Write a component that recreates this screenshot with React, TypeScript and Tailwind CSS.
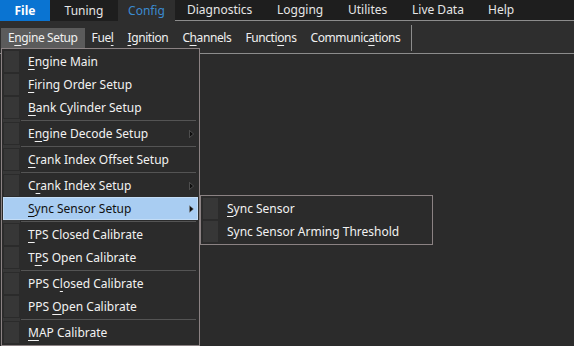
import React from "react";

type Item = { pre: string; key?: string; post?: string; sub?: boolean; active?: boolean };

const font = { fontFamily: '"Noto Sans", "Open Sans", sans-serif' };

function Label({ pre, k, post }: { pre: string; k?: string; post?: string }) {
  return (
    <span className="whitespace-nowrap">
      {pre}
      {k && <span className="underline underline-offset-[3px] decoration-1">{k}</span>}
      {post}
    </span>
  );
}

function Arrow() {
  return (
    <svg width="5" height="8" viewBox="0 0 5 8" className="shrink-0">
      <path d="M0.5 0.5 L4.5 4 L0.5 7.5 Z" fill="#0d0d0d" stroke="#9a9a9a" strokeWidth="0.4" />
    </svg>
  );
}

function MenuRow({ item }: { item: Item }) {
  const on = item.active;
  return (
    <div
      className={`mx-px flex h-[23px] items-center border ${
        on ? "border-[#c3dcf5] bg-[#a9cdf2] text-[#111]" : "border-transparent text-[#f2f2f2]"
      }`}
    >
      <div className={`h-full w-[15px] shrink-0 ${on ? "" : "bg-[#373737]"}`} />
      <div className="flex flex-1 items-center justify-between pl-[9px] pr-[3px]">
        <Label pre={item.pre} k={item.key} post={item.post} />
        {item.sub && <Arrow />}
      </div>
    </div>
  );
}

function Sep() {
  return (
    <div className="mx-px flex h-[3px] items-center">
      <div className="h-full w-[17px] shrink-0 bg-[#373737]" />
      <div className="ml-[1px] mr-[2px] h-px flex-1 bg-[#545454]" />
    </div>
  );
}

const groups: Item[][] = [
  [
    { pre: "", key: "E", post: "ngine Main" },
    { pre: "", key: "F", post: "iring Order Setup" },
    { pre: "", key: "B", post: "ank Cylinder Setup" },
  ],
  [{ pre: "E", key: "n", post: "gine Decode Setup", sub: true }],
  [{ pre: "", key: "C", post: "rank Index Offset Setup" }],
  [
    { pre: "C", key: "r", post: "ank Index Setup", sub: true },
    { pre: "", key: "S", post: "ync Sensor Setup", sub: true, active: true },
  ],
  [
    { pre: "", key: "T", post: "PS Closed Calibrate" },
    { pre: "T", key: "P", post: "S Open Calibrate" },
  ],
  [
    { pre: "PPS C", key: "l", post: "osed Calibrate" },
    { pre: "PPS ", key: "O", post: "pen Calibrate" },
  ],
  [{ pre: "", key: "M", post: "AP Calibrate" }],
];

const tabs = [
  { name: "Diagnostics", w: "w-[90px]" },
  { name: "Logging", w: "w-[71px]" },
  { name: "Utilites", w: "w-[64px]" },
  { name: "Live Data", w: "w-[76px]" },
  { name: "Help", w: "w-[60px]" },
];

export default function App() {
  return (
    <div className="relative h-[346px] w-[574px] overflow-hidden bg-[#2b2b2b] text-[12px]" style={font}>
      {/* top tabs */}
      <div className="flex h-[21px] bg-[#1e1e1e] text-[#e6e6e6]">
        <div className="flex w-[50px] items-center justify-center bg-[#0a74d2] font-bold text-white">File</div>
        <div className="flex w-[68px] items-center justify-center">Tuning</div>
        <div className="flex w-[57px] items-center justify-center bg-[#2e2e2e] text-[#3b8ad0]">Config</div>
        <div className="flex flex-1 border-b border-[#8c8c8c]">
          {tabs.map((t) => (
            <div key={t.name} className={`flex ${t.w} items-center pl-3`}>
              {t.name}
            </div>
          ))}
        </div>
      </div>

      {/* ribbon row */}
      <div className="flex h-[33px] items-center border-b border-[#8c8c8c] bg-[#2e2e2e] pt-px tracking-[-0.4px] text-[#f0f0f0]">
        <div className="ml-px flex h-[20px] items-center bg-[#5b5b5b] px-[7px]">
          <Label pre="E" k="n" post="gine Setup" />
        </div>
        <div className="px-[7px]">
          <Label pre="Fue" k="l" />
        </div>
        <div className="px-[7px]">
          <Label pre="" k="I" post="gnition" />
        </div>
        <div className="px-[7px]">
          <Label pre="C" k="h" post="annels" />
        </div>
        <div className="px-[7px]">
          <Label pre="Functi" k="o" post="ns" />
        </div>
        <div className="px-[7px]">
          <Label pre="Communic" k="a" post="tions" />
        </div>
        <div className="ml-[4px] h-[26px] w-px bg-[#8c8c8c]" />
      </div>

      {/* dropdown */}
      <div className="absolute left-px top-[48px] w-[199px] border border-[#8b8283] bg-[#2b2b2b] pb-px pt-px">
        {groups.map((g, gi) => (
          <React.Fragment key={gi}>
            {gi > 0 && <Sep />}
            {g.map((it, i) => (
              <MenuRow key={i} item={it} />
            ))}
          </React.Fragment>
        ))}
      </div>

      {/* submenu */}
      <div className="absolute left-[200px] top-[195px] w-[233px] border border-[#8b8283] bg-[#2b2b2b] py-px">
        <MenuRow item={{ pre: "", key: "S", post: "ync Sensor" }} />
        <MenuRow item={{ pre: "Sync Sensor Arming Threshold" }} />
      </div>
    </div>
  );
}
